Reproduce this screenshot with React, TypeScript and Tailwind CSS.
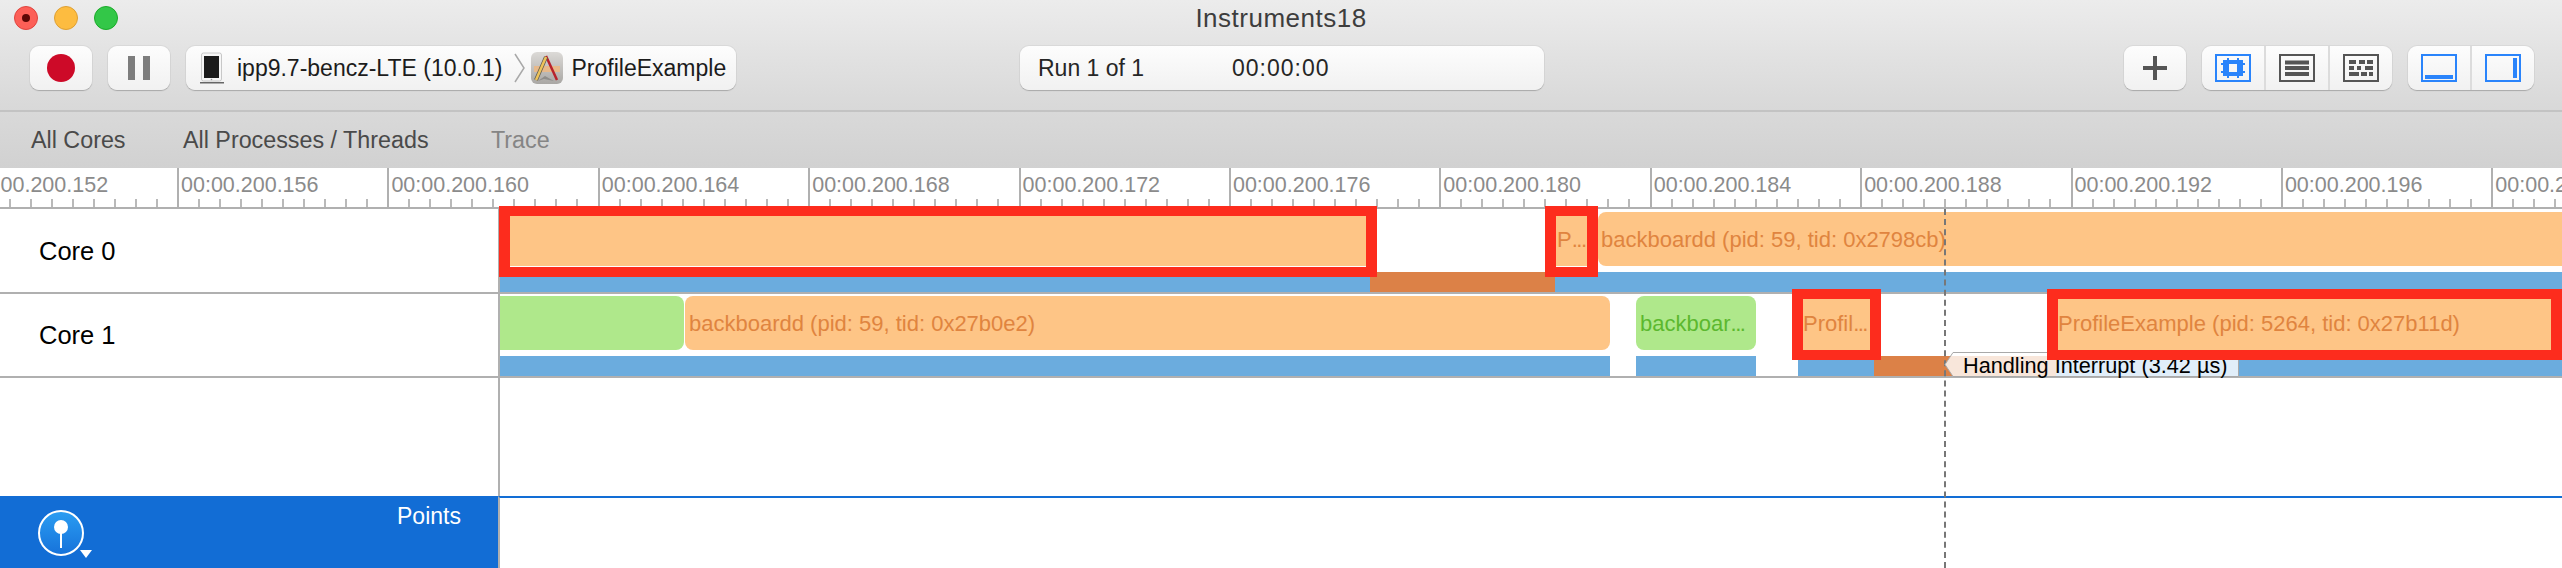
import React from 'react';

const RULER_LABELS = ['00:00.200.152', '00:00.200.156', '00:00.200.160', '00:00.200.164', '00:00.200.168', '00:00.200.172', '00:00.200.176', '00:00.200.180', '00:00.200.184', '00:00.200.188', '00:00.200.192', '00:00.200.196', '00:00.200.200'];
const MINOR_TICKS = [0, 1, 2, 3, 4, 5, 6, 7, 8];

const Btn = ({ className, children }: { className: string; children?: React.ReactNode }) => (
  <div className={`flex items-center rounded-[9px] bg-gradient-to-b from-[#fdfdfd] to-[#f1f1f1] shadow-[0_1px_1px_#a8a8a8,0_0_0_1px_#d9d9d9] ${className}`}>
    {children}
  </div>
);

const BarLabel = ({ className, children }: { className: string; children?: React.ReactNode }) => (
  <div className={`flex h-[54px] shrink-0 items-center overflow-hidden whitespace-nowrap text-[22px] ${className}`}>
    {children}
  </div>
);

const Dots = () => <span className="tracking-[-1.5px]">...</span>;

const RedBox = ({ className }: { className: string }) => (
  <div className={`absolute border-x-[11px] border-y-[10px] border-[#fd2c1d] ${className}`} />
);

export default function App() {
  return (
    <div className="relative h-[568px] w-[2562px] overflow-hidden bg-white font-['Liberation_Sans',sans-serif]">
      {/* toolbar */}
      <div className="relative h-[112px] border-b-2 border-[#c3c3c3] bg-gradient-to-b from-[#ececec] to-[#d8d8d8]">
        <div className="absolute left-0 right-0 top-[4px] text-center text-[26px] leading-[28px] tracking-[0.5px] text-[#3d3d3d]">Instruments18</div>
        <div className="flex gap-[16px] pl-[14px] pt-[6px]">
          <div className="flex h-[24px] w-[24px] items-center justify-center rounded-full border border-[#e0443e] bg-[#fc5f57]">
            <div className="h-[8px] w-[8px] rounded-full bg-[#5c0705]" />
          </div>
          <div className="h-[24px] w-[24px] rounded-full border border-[#dea034] bg-[#fdbc40]" />
          <div className="h-[24px] w-[24px] rounded-full border border-[#1aab29] bg-[#33c748]" />
        </div>
        <div className="mt-[16px] flex h-[44px] items-stretch pl-[30px]">
          <Btn className="w-[62px] justify-center">
            <div className="h-[28px] w-[28px] rounded-full bg-[#cd0a28]" />
          </Btn>
          <Btn className="ml-[16px] w-[62px] justify-center gap-[8px]">
            <div className="h-[24px] w-[7px] bg-[#7d7d7d]" />
            <div className="h-[24px] w-[7px] bg-[#7d7d7d]" />
          </Btn>
          <Btn className="ml-[16px] w-[550px] pl-[14px] text-[23px] text-[#1c1c1c]">
            <svg width="24" height="32" viewBox="0 0 24 32" className="shrink-0">
              <rect x="1.5" y="1" width="20" height="28" rx="2" fill="#f6f6f6" stroke="#c8c8c8" />
              <rect x="4" y="4" width="15" height="22" fill="#1b1b1b" />
              <circle cx="11.5" cy="27.5" r="0.8" fill="#999" />
              <rect x="0" y="30" width="24" height="1.5" fill="#666" />
            </svg>
            <span className="ml-[13px] whitespace-nowrap">ipp9.7-bencz-LTE (10.0.1)</span>
            <svg width="12" height="30" viewBox="0 0 12 30" className="ml-[11px] shrink-0">
              <path d="M1 1 L10 15 L1 29" fill="none" stroke="#a8a8a8" strokeWidth="1.5" />
            </svg>
            <svg width="32" height="32" viewBox="0 0 32 32" className="ml-[5px] shrink-0">
              <defs>
                <linearGradient id="appbg" x1="0" y1="0" x2="0" y2="1">
                  <stop offset="0" stopColor="#dcdad7" />
                  <stop offset="1" stopColor="#a9a7a4" />
                </linearGradient>
              </defs>
              <rect x="0" y="0" width="32" height="32" rx="6" fill="url(#appbg)" />
              <path d="M3 14 H29 V20 H3 Z" fill="#e8b98a" />
              <path d="M7 29 L13 27 L23 29 L14 24 Z" fill="#8f8d8a" />
              <path d="M15 4 L26 28" stroke="#b8232c" strokeWidth="2.5" />
              <path d="M15 5 L5 28" stroke="#5f5a4e" strokeWidth="4" />
              <path d="M15 5 L5 28" stroke="#eec35a" strokeWidth="2.5" />
            </svg>
            <span className="ml-[9px] whitespace-nowrap">ProfileExample</span>
          </Btn>
          <Btn className="ml-[284px] w-[524px] pl-[18px] text-[23px] text-[#262626]">
            <span className="w-[194px] whitespace-nowrap">Run 1 of 1</span>
            <span className="whitespace-nowrap tracking-[1px]">00:00:00</span>
          </Btn>
          <Btn className="ml-[580px] w-[62px] justify-center">
            <svg width="24" height="24" viewBox="0 0 24 24">
              <path d="M0 12 H24 M12 0 V24" stroke="#555" strokeWidth="4" />
            </svg>
          </Btn>
          <Btn className="ml-[16px] w-[190px]">
            <div className="flex h-full w-[64px] items-center justify-center border-r-2 border-[#dcdcdc]">
              <svg width="36" height="28" viewBox="0 0 36 28">
                <rect x="1" y="1" width="34" height="26" fill="none" stroke="#2a84fb" strokeWidth="2" />
                <path fillRule="evenodd" d="M8 6 H28 V22 H8 Z M14 10 V18 H22 V10 Z" fill="#2a84fb" />
                <path d="M12 4 h2 v2 h-2 Z M22 4 h2 v2 h-2 Z M12 22 h2 v2 h-2 Z M22 22 h2 v2 h-2 Z M6 9 h2 v2 h-2 Z M6 17 h2 v2 h-2 Z M28 9 h2 v2 h-2 Z M28 17 h2 v2 h-2 Z" fill="#2a84fb" />
              </svg>
            </div>
            <div className="flex h-full w-[64px] items-center justify-center border-r-2 border-[#dcdcdc]">
              <svg width="36" height="28" viewBox="0 0 36 28">
                <rect x="1" y="1" width="34" height="26" fill="none" stroke="#555" strokeWidth="2" />
                <path d="M6 8.5 H30 M6 14 H30 M6 20 H30" stroke="#555" strokeWidth="4.2" />
              </svg>
            </div>
            <div className="flex h-full flex-1 items-center justify-center">
              <svg width="36" height="28" viewBox="0 0 36 28">
                <rect x="1" y="1" width="34" height="26" fill="none" stroke="#555" strokeWidth="2" />
                <path d="M6 8 h7 M16 8 h6 M24 8 h6 M6 14 h5 M14 14 h4 M22 14 h8 M6 20 h10 M18 20 h6 M26 20 h4" stroke="#555" strokeWidth="4" />
              </svg>
            </div>
          </Btn>
          <Btn className="ml-[16px] w-[126px]">
            <div className="flex h-full w-[64px] items-center justify-center border-r-2 border-[#dcdcdc]">
              <svg width="36" height="28" viewBox="0 0 36 28">
                <rect x="1" y="1" width="34" height="26" fill="none" stroke="#2a84fb" strokeWidth="2" />
                <rect x="4" y="21" width="28" height="4" fill="#2a84fb" />
              </svg>
            </div>
            <div className="flex h-full flex-1 items-center justify-center">
              <svg width="36" height="28" viewBox="0 0 36 28">
                <rect x="1" y="1" width="34" height="26" fill="none" stroke="#2a84fb" strokeWidth="2" />
                <rect x="28" y="4" width="4" height="20" fill="#2a84fb" />
              </svg>
            </div>
          </Btn>
        </div>
      </div>

      {/* scope bar */}
      <div className="flex h-[56px] items-center bg-gradient-to-b from-[#d9d9d9] to-[#d1d1d1] pl-[31px] text-[23.3px] text-[#4a4a4a]">
        <span className="w-[152px]">All Cores</span>
        <span className="w-[308px]">All Processes / Threads</span>
        <span className="text-[#858585]">Trace</span>
      </div>

      {/* ruler */}
      <div className="ml-[-33.4px] flex h-[41px] border-b-2 border-[#b0b0b0]">
        {RULER_LABELS.map((label) => (
          <div key={label} className="flex w-[210.4px] shrink-0 flex-col border-l-2 border-[#b0b0b0]">
            <div className="h-[31px] whitespace-nowrap pl-[2px] pt-[5px] text-[21.5px] leading-[24px] text-[#8b8b8b]">{label}</div>
            <div className="flex gap-[19px] pl-[19px]">
              {MINOR_TICKS.map((t) => (
                <div key={t} className="h-[8px] w-[2px] bg-[#b9b9b9]" />
              ))}
            </div>
          </div>
        ))}
      </div>

      {/* core rows */}
      <div className="flex h-[85px] border-b-2 border-[#b0b0b0]">
        <div className="flex w-[500px] shrink-0 items-center border-r-2 border-[#b0b0b0] pl-[39px] pt-[2px] text-[25.5px] text-black">Core 0</div>
        <div className="flex min-w-0 flex-1 flex-col overflow-hidden pt-[3px]">
          <div className="flex">
            <BarLabel className="w-[877px] bg-[#fec586]" />
            <div className="w-[178px] shrink-0" />
            <BarLabel className="w-[43px] bg-[#fec586] pl-[2px] text-[#e0843f]">P<Dots /></BarLabel>
            <BarLabel className="flex-1 rounded-l-[8px] bg-[#fec586] pl-[3px] text-[#e0843f]">backboardd (pid: 59, tid: 0x2798cb)</BarLabel>
          </div>
          <div className="mt-[6px] flex h-[20px]">
            <div className="w-[870px] bg-[#6bacde]" />
            <div className="w-[185px] bg-[#dc8147]" />
            <div className="flex-1 bg-[#6bacde]" />
          </div>
        </div>
      </div>
      <div className="flex h-[84px] border-b-2 border-[#b0b0b0]">
        <div className="flex w-[500px] shrink-0 items-center border-r-2 border-[#b0b0b0] pl-[39px] text-[25.5px] text-black">Core 1</div>
        <div className="flex min-w-0 flex-1 flex-col overflow-hidden pt-[2px]">
          <div className="flex">
            <BarLabel className="w-[184px] rounded-r-[8px] bg-[#afe88b]" />
            <BarLabel className="ml-[1px] w-[925px] rounded-[8px] bg-[#fec586] pl-[4px] text-[#e0843f]">backboardd (pid: 59, tid: 0x27b0e2)</BarLabel>
            <BarLabel className="ml-[26px] w-[120px] rounded-[8px] bg-[#afe88b] pl-[4px] text-[#5cb82f]">backboar<Dots /></BarLabel>
            <BarLabel className="ml-[46px] w-[69px] bg-[#fec586] pl-[1px] text-[#e0843f]">Profil<Dots /></BarLabel>
            <BarLabel className="ml-[186px] flex-1 bg-[#fec586] pl-[1px] text-[#e0843f]">ProfileExample (pid: 5264, tid: 0x27b11d)</BarLabel>
          </div>
          <div className="mt-[6px] flex h-[20px]">
            <div className="w-[1110px] bg-[#6bacde]" />
            <div className="ml-[26px] w-[120px] bg-[#6bacde]" />
            <div className="ml-[42px] w-[76px] bg-[#6bacde]" />
            <div className="w-[182px] bg-[#dc8147]" />
            <div className="flex-1 bg-[#6bacde]" />
          </div>
        </div>
      </div>

      {/* empty row + points track */}
      <div className="flex h-[118px]">
        <div className="w-[500px] shrink-0 border-r-2 border-[#b0b0b0]" />
      </div>
      <div className="flex h-[72px]">
        <div className="flex w-[498px] shrink-0 items-start bg-[#126dd5] pl-[38px] pt-[14px]">
          <svg width="56" height="50" viewBox="0 0 56 50" className="shrink-0">
            <defs>
              <linearGradient id="pin" x1="0" y1="0" x2="0" y2="1">
                <stop offset="0" stopColor="#2b9df2" />
                <stop offset="1" stopColor="#1672da" />
              </linearGradient>
            </defs>
            <circle cx="23" cy="23" r="22" fill="url(#pin)" stroke="#fff" strokeWidth="2" />
            <circle cx="23" cy="17" r="7" fill="#fff" />
            <path d="M23 20 V38" stroke="#fff" strokeWidth="2" />
            <path d="M42 40 H54 L48 48 Z" fill="#fff" />
          </svg>
          <span className="ml-[303px] mt-[-8px] text-[23px] leading-[28px] text-white">Points</span>
        </div>
        <div className="flex-1 border-l-2 border-t-2 border-l-[#b0b0b0] border-t-[#126dd5]" />
      </div>

      {/* overlays */}
      <div className="absolute bottom-0 left-[1944px] top-[209px] w-0 border-l-2 border-dashed border-[#777]" />
      <div className="absolute left-[1944px] top-[352px] flex h-[25px] w-[295px] items-center">
        <svg width="295" height="25" viewBox="0 0 295 25" className="absolute left-0 top-0">
          <path d="M9 0.5 H294.5 V24.5 H9 L1 12.5 Z" fill="#ffffff" fillOpacity="0.8" stroke="#a9a9a9" />
        </svg>
        <span className="relative ml-[19px] mt-[2px] whitespace-nowrap text-[21.7px] leading-[25px] text-black">Handling Interrupt (3.42 µs)</span>
      </div>
      <RedBox className="left-[499px] top-[206px] h-[71px] w-[878px]" />
      <RedBox className="left-[1545px] top-[206px] h-[71px] w-[53px]" />
      <RedBox className="left-[1792px] top-[289px] h-[71px] w-[89px]" />
      <RedBox className="left-[2047px] top-[289px] h-[71px] w-[515px]" />
    </div>
  );
}
